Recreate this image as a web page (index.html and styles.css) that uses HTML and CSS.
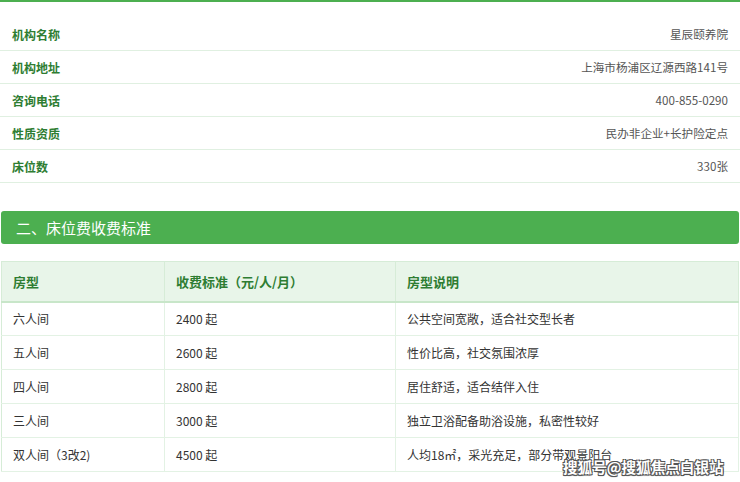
FILE: index.html
```html
<!DOCTYPE html>
<html lang="zh">
<head>
<meta charset="utf-8">
<link rel="stylesheet" href="styles.css">
</head>
<body>
<div class="page">
  <div class="info">
    <div class="row"><span class="label">机构名称</span><span class="value">星辰颐养院</span></div>
    <div class="row"><span class="label">机构地址</span><span class="value">上海市杨浦区辽源西路141号</span></div>
    <div class="row"><span class="label">咨询电话</span><span class="value">400-855-0290</span></div>
    <div class="row"><span class="label">性质资质</span><span class="value">民办非企业+长护险定点</span></div>
    <div class="row"><span class="label">床位数</span><span class="value">330张</span></div>
  </div>
  <div class="section-title">二、床位费收费标准</div>
  <table class="fees">
    <thead>
      <tr><th class="c1">房型</th><th class="c2">收费标准（元/人/月）</th><th class="c3">房型说明</th></tr>
    </thead>
    <tbody>
      <tr><td>六人间</td><td>2400 起</td><td>公共空间宽敞，适合社交型长者</td></tr>
      <tr><td>五人间</td><td>2600 起</td><td>性价比高，社交氛围浓厚</td></tr>
      <tr><td>四人间</td><td>2800 起</td><td>居住舒适，适合结伴入住</td></tr>
      <tr><td>三人间</td><td>3000 起</td><td>独立卫浴配备助浴设施，私密性较好</td></tr>
      <tr><td>双人间（3改2)</td><td>4500 起</td><td>人均18㎡，采光充足，部分带观景阳台</td></tr>
    </tbody>
  </table>
  <div class="watermark">搜狐号@搜狐焦点白银站</div>
</div>
</body>
</html>
```

FILE: styles.css
```css
* { box-sizing: border-box; }
html, body { margin: 0; padding: 0; background: #fff; }
body {
  font-family: "Noto Sans CJK SC", "Microsoft YaHei", sans-serif;
  font-size: 12px;
  color: #444;
}
.page {
  position: relative;
  width: 740px;
  height: 482px;
  overflow: hidden;
  border-top: 2px solid #4caf50;
}
.info {
  padding-top: 16px;
}
.row {
  display: flex;
  justify-content: space-between;
  align-items: center;
  height: 33px;
  border-bottom: 1px solid #e0f0e1;
  padding: 0 12px;
}
.label {
  color: #2e7d32;
  font-weight: bold;
  font-size: 12px;
}
.value {
  color: #555;
  font-size: 11.6px;
}
.section-title {
  margin: 28px 1px 17px 1px;
  height: 33px;
  background: #4caf50;
  border-radius: 3px;
  color: #fff;
  font-size: 15px;
  line-height: 33px;
  padding-left: 15px;
}
.fees {
  width: 738px;
  margin-left: 1px;
  border-collapse: collapse;
  border: 1px solid #d6ecd7;
}
.fees thead tr { height: 40px; }
.fees tbody tr { height: 34px; }
.fees th {
  background: #e8f5e9;
  color: #2e7d32;
  font-weight: bold;
  font-size: 13px;
  text-align: left;
  padding: 0 11px;
  border-right: 1px solid #d6ecd7;
  border-bottom: 2px solid #c8e6c9;
}
.fees td {
  padding: 0 11px;
  color: #333;
  font-size: 12px;
  border-right: 1px solid #e3f2e4;
  border-bottom: 1px solid #e3f2e4;
}
.fees .c1 { width: 163px; }
.fees .c2 { width: 231px; }
.watermark {
  position: absolute;
  left: 563px;
  top: 454px;
  font-size: 14.6px;
  font-weight: bold;
  color: #fff;
  text-shadow: 1px 1px 0 #555, -1px -1px 0 #555, 1px -1px 0 #555, -1px 1px 0 #555, 0 1px 1px #333;
}
```
